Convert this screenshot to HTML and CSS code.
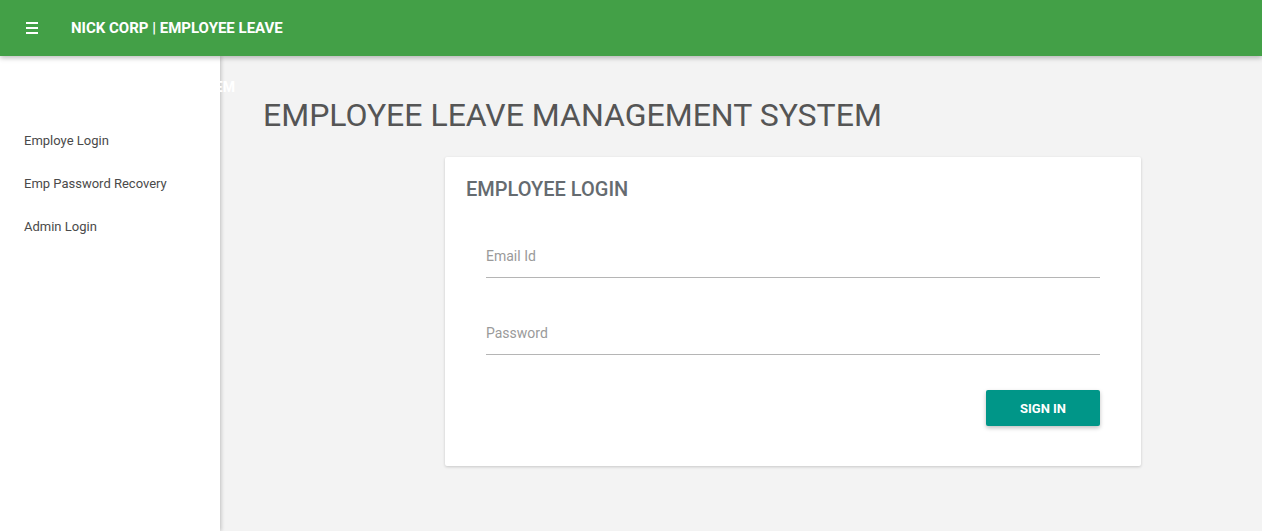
FILE: index.html
```html
<!DOCTYPE html>
<html>
<head>
<meta charset="utf-8">
<link rel="stylesheet" href="styles.css">
</head>
<body>
<header class="topbar">
  <span class="menu-icon"><span></span><span></span><span></span></span>
  <span class="brand">NICK CORP | EMPLOYEE LEAVE</span>
</header>
<div class="layout">
  <aside class="sidebar">
    <div class="side-title">EMPLOYEE LEAVE MANAGEMENT SYSTEM</div>
    <nav class="side-nav">
      <a class="side-link">Employe Login</a>
      <a class="side-link">Emp Password Recovery</a>
      <a class="side-link">Admin Login</a>
    </nav>
  </aside>
  <main class="main">
    <h1 class="page-title">EMPLOYEE LEAVE MANAGEMENT SYSTEM</h1>
    <section class="card">
      <h2 class="card-title">EMPLOYEE LOGIN</h2>
      <div class="field field-first"><span class="field-label">Email Id</span></div>
      <div class="field"><span class="field-label">Password</span></div>
      <div class="actions"><button class="btn">SIGN IN</button></div>
    </section>
  </main>
</div>
</body>
</html>
```
FILE: styles.css
```css
* { box-sizing: border-box; }
html, body { margin: 0; padding: 0; height: 100%; }
body {
  font-family: Roboto, "Liberation Sans", sans-serif;
  background: #f3f3f3;
  overflow: hidden;
}
.topbar {
  position: relative;
  z-index: 3;
  height: 56px;
  background: #43a047;
  display: flex;
  align-items: center;
  box-shadow: 0 2px 5px rgba(0,0,0,0.26);
}
.menu-icon {
  width: 12px;
  margin-left: 26px;
  display: flex;
  flex-direction: column;
  gap: 3px;
}
.menu-icon span {
  display: block;
  height: 2px;
  background: #fff;
}
.brand {
  margin-left: 33px;
  color: #fff;
  font-weight: 700;
  font-size: 15px;
}
.layout {
  display: flex;
  height: calc(100% - 56px);
}
.sidebar {
  width: 220px;
  flex-shrink: 0;
  background: #fff;
  box-shadow: 1px 0 4px rgba(0,0,0,0.22);
  position: relative;
  z-index: 2;
}
.side-title {
  white-space: nowrap;
  color: #fff;
  font-weight: 700;
  font-size: 14px;
  margin-top: 23px;
  line-height: 16px;
  text-align: right;
  direction: rtl;
  width: 235px;
  position: relative;
  z-index: -1;
}
.side-nav {
  display: flex;
  flex-direction: column;
  margin-top: 24px;
}
.side-link {
  display: block;
  height: 43px;
  line-height: 43px;
  padding-left: 24px;
  font-size: 13px;
  color: #4a4a4a;
}
.main {
  flex: 1;
  padding-left: 43px;
}
.page-title {
  margin: 39px 0 0 0;
  font-size: 32px;
  font-weight: 400;
  color: #555;
  line-height: 40px;
}
.card {
  margin: 22px 0 0 182px;
  width: 696px;
  height: 309px;
  background: #fff;
  border-radius: 2px;
  box-shadow: 0 1px 3px rgba(0,0,0,0.18);
  padding: 20px 41px 0 21px;
}
.card-title {
  margin: 0;
  font-size: 20px;
  font-weight: 500;
  color: #656b70;
  line-height: 24px;
}
.field {
  margin-left: 20px;
  height: 41px;
  border-bottom: 1px solid #b5b5b5;
  display: flex;
  align-items: center;
  margin-top: 36px;
}
.field-first { margin-top: 36px; }
.field-label {
  font-size: 14px;
  color: #9a9a9a;
  margin-top: -2px;
}
.actions {
  display: flex;
  justify-content: flex-end;
  margin-top: 35px;
}
.btn {
  width: 114px;
  height: 36px;
  border: 0;
  border-radius: 2px;
  background: #009688;
  color: #fff;
  font-family: Roboto, "Liberation Sans", sans-serif;
  font-weight: 700;
  font-size: 13px;
  box-shadow: 0 2px 4px rgba(0,0,0,0.25);
}
```
